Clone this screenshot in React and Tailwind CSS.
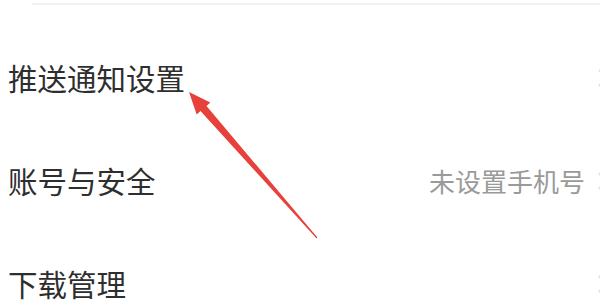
import React from 'react';

const Chevron = () => (
  <svg width="14" height="22" viewBox="0 0 14 22" className="shrink-0">
    <path d="M3 3 L11 11 L3 19" fill="none" stroke="#e2e2e2" strokeWidth="2.5" />
  </svg>
);

const Row = ({ title, value }) => (
  <div className="h-[103px] flex items-center pl-2">
    <span className="flex-1 text-[29.5px] text-[#2e2e2e] leading-none">{title}</span>
    {value && <span className="text-[26px] text-[#9a9a9a] leading-none mr-[11px]">{value}</span>}
    <div className="w-[14px] mr-[-10px]">
      <Chevron />
    </div>
  </div>
);

export default function App() {
  return (
    <div
      className="relative w-[600px] h-[303px] overflow-hidden bg-white"
      style={{ fontFamily: '"Noto Sans CJK SC", "Noto Sans", sans-serif' }}
    >
      <div className="h-[2px] bg-[#f2f2f2] ml-8 mt-[3px]" />
      <div className="mt-[21px]">
        <Row title="推送通知设置" />
        <Row title="账号与安全" value="未设置手机号" />
        <Row title="下载管理" />
      </div>

      {/* red annotation arrow */}
      <svg className="absolute left-0 top-0 pointer-events-none" width="600" height="303">
        <polygon
          points="189,92 210.3,102.6 206.5,105.9 317.4,237.6 316.6,238.4 200.5,111.1 196.7,114.4"
          fill="#e8403a"
        />
      </svg>
    </div>
  );
}
